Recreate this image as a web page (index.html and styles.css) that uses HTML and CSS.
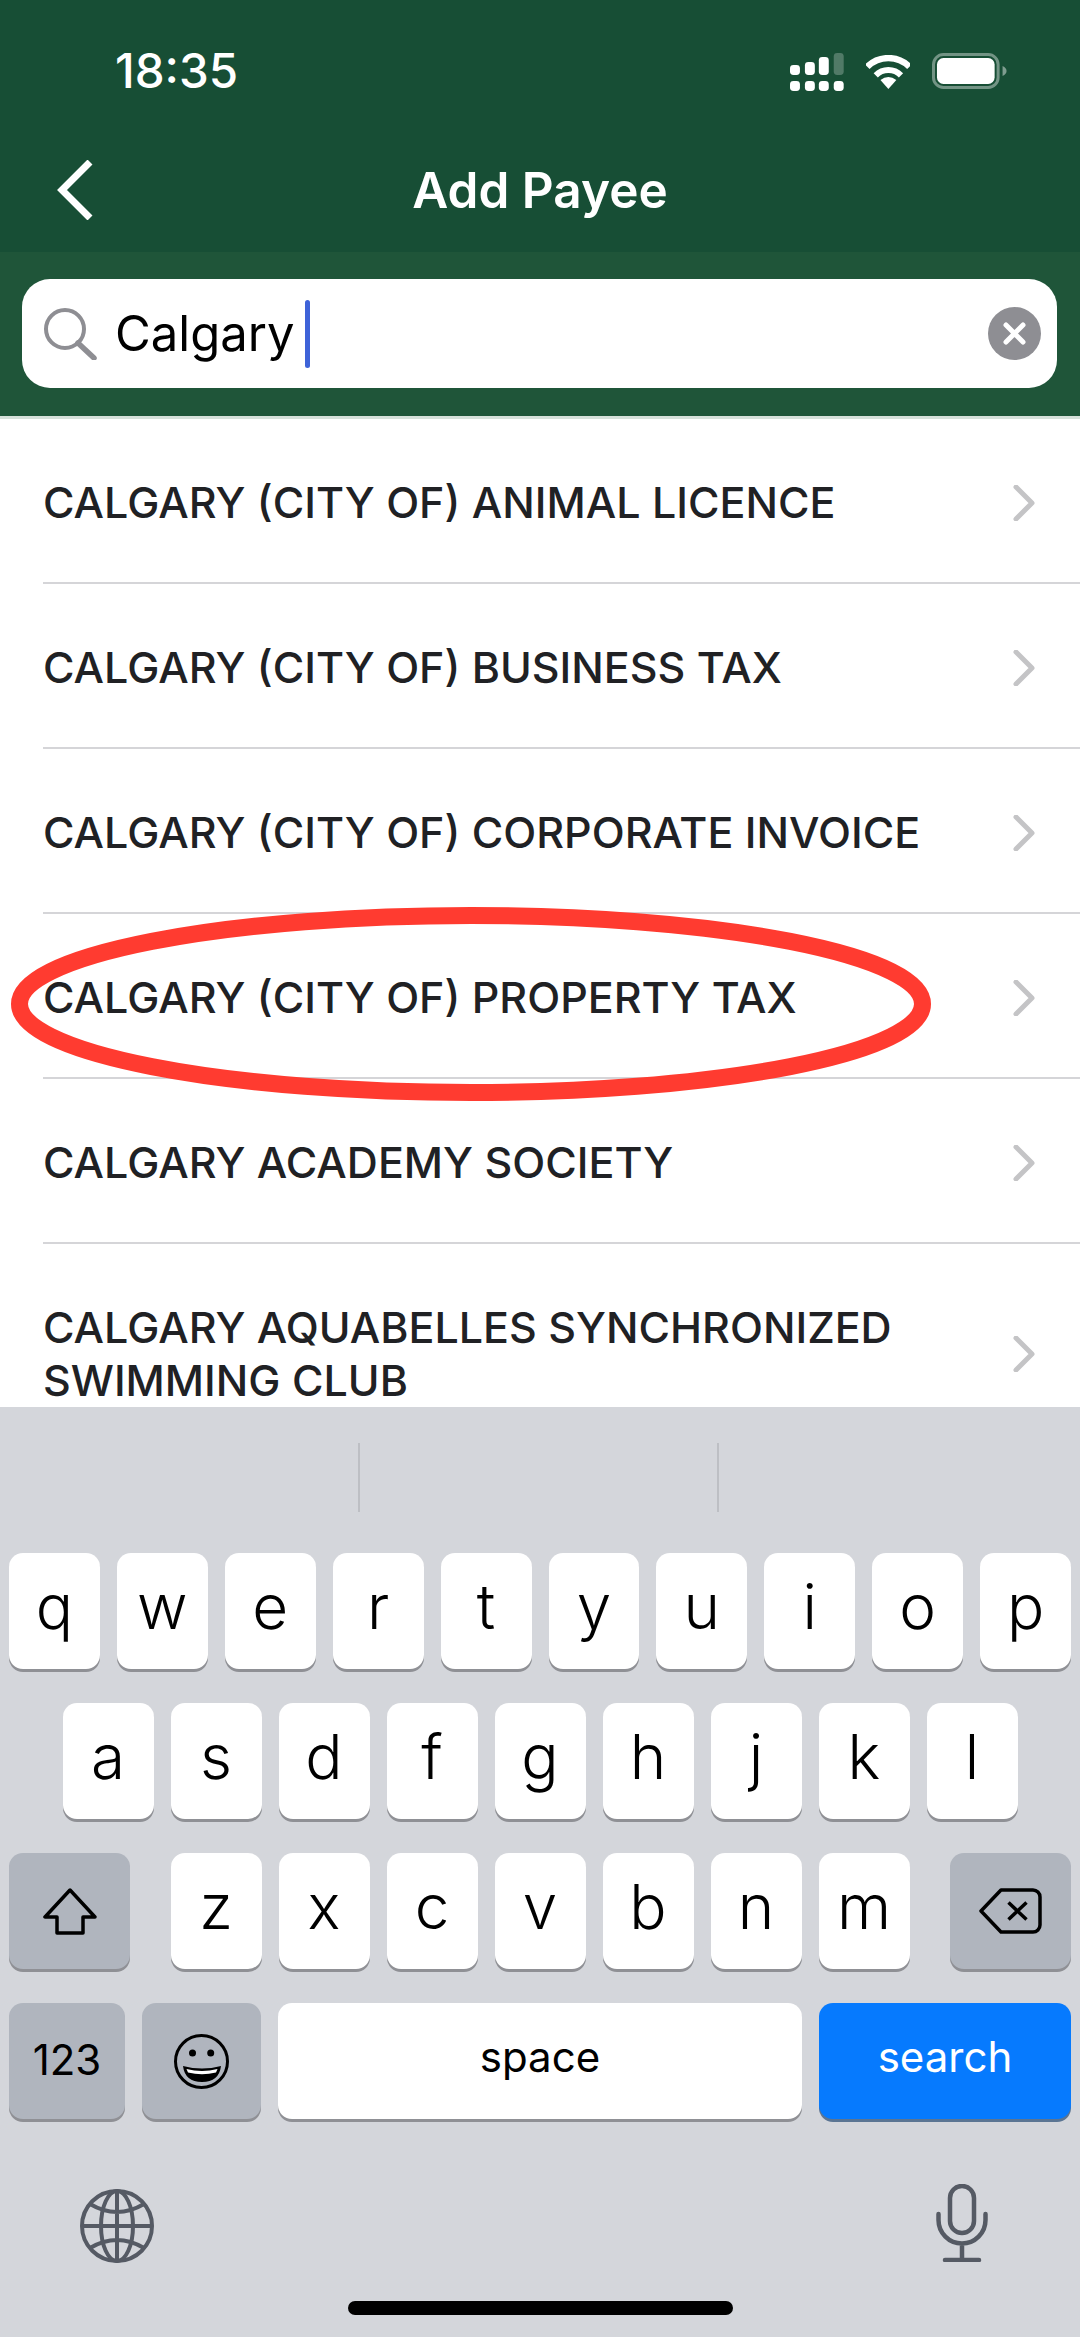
FILE: index.html
```html
<!DOCTYPE html>
<html lang="en">
<head>
  <meta charset="UTF-8">
  <title>Add Payee</title>
  <link rel="stylesheet" href="styles.css">
</head>
<body>

  <div class="topbar">
    <div class="status">
      <span class="time">18:35</span>
      <div class="status-icons">
        <svg class="signal" width="54" height="38" viewBox="0 0 54 38">
          <rect x="0" y="12" width="10" height="10" rx="3.5"/>
          <rect x="15" y="9" width="10" height="13" rx="3.5"/>
          <rect x="29" y="4" width="10" height="18" rx="3.5"/>
          <rect x="44" y="0" width="10" height="22" rx="3.5" opacity="0.25"/>
          <rect x="0" y="28" width="10" height="10" rx="3.5"/>
          <rect x="15" y="28" width="10" height="10" rx="3.5"/>
          <rect x="29" y="28" width="10" height="10" rx="3.5"/>
          <rect x="44" y="28" width="10" height="10" rx="3.5"/>
        </svg>
        <svg class="wifi" width="45" height="34" viewBox="0 0 45 34">
          <path d="M1.3 11.8A30 30 0 0 1 43.7 11.8" fill="none" stroke="#fff" stroke-width="6.5"/>
          <path d="M9.8 20.3A18 18 0 0 1 35.2 20.3" fill="none" stroke="#fff" stroke-width="6"/>
          <path d="M22.5 34L14.5 25Q22.5 19 30.5 25Z" fill="#fff"/>
        </svg>
        <svg class="battery" width="75" height="36" viewBox="0 0 75 36">
          <rect x="1.5" y="1.5" width="65" height="33" rx="10" fill="none" stroke="#fff" stroke-opacity="0.4" stroke-width="3"/>
          <rect x="5" y="5" width="58" height="26" rx="6.5" fill="#fff"/>
          <path d="M71 13Q75 15 75 18Q75 21 71 23Z" fill="#fff" fill-opacity="0.45"/>
        </svg>
      </div>
    </div>
    <div class="nav">
      <svg class="back" width="36" height="60" viewBox="0 0 36 60">
        <path d="M33 2L5 30L33 58" fill="none" stroke="#fff" stroke-width="7"/>
      </svg>
      <h1>Add Payee</h1>
    </div>
  </div>

  <div class="search-band">
    <div class="search-box">
      <svg class="glass" width="54" height="52" viewBox="0 0 54 52">
        <circle cx="22" cy="21" r="19" fill="none" stroke="#8e8e93" stroke-width="4"/>
        <path d="M35 35L51 50" fill="none" stroke="#8e8e93" stroke-width="5.5" stroke-linecap="round"/>
      </svg>
      <span class="query">Calgary</span>
      <span class="caret"></span>
      <svg class="clear" width="53" height="53" viewBox="0 0 53 53">
        <circle cx="26.5" cy="26.5" r="26.5" fill="#8e8e93"/>
        <path d="M18 18L35 35M35 18L18 35" fill="none" stroke="#fff" stroke-width="5" stroke-linecap="round"/>
      </svg>
    </div>
  </div>

  <div class="list">
    <div class="row"><span>CALGARY (CITY OF) ANIMAL LICENCE</span>
      <svg class="chev" width="22" height="36" viewBox="0 0 22 36"><path d="M3 2L19 18L3 34"/></svg></div>
    <div class="row"><span>CALGARY (CITY OF) BUSINESS TAX</span>
      <svg class="chev" width="22" height="36" viewBox="0 0 22 36"><path d="M3 2L19 18L3 34"/></svg></div>
    <div class="row"><span>CALGARY (CITY OF) CORPORATE INVOICE</span>
      <svg class="chev" width="22" height="36" viewBox="0 0 22 36"><path d="M3 2L19 18L3 34"/></svg></div>
    <div class="row"><span>CALGARY (CITY OF) PROPERTY TAX</span>
      <svg class="chev" width="22" height="36" viewBox="0 0 22 36"><path d="M3 2L19 18L3 34"/></svg></div>
    <div class="row"><span>CALGARY ACADEMY SOCIETY</span>
      <svg class="chev" width="22" height="36" viewBox="0 0 22 36"><path d="M3 2L19 18L3 34"/></svg></div>
    <div class="row tall"><span>CALGARY AQUABELLES SYNCHRONIZED<br>SWIMMING CLUB</span>
      <svg class="chev" width="22" height="36" viewBox="0 0 22 36"><path d="M3 2L19 18L3 34"/></svg></div>

    <!-- red ring drawn over the screenshot -->
    <svg class="ring" width="1080" height="988" viewBox="0 0 1080 988">
      <ellipse cx="471" cy="585" rx="451.500" ry="88.500" fill="none" stroke="#ff3b30" stroke-width="17"/>
    </svg>
  </div>

  <div class="keyboard">
    <div class="suggest">
      <span class="divider"></span>
      <span class="divider"></span>
    </div>

    <div class="keys">
      <div class="key-row">
        <div class="key">q</div><div class="key">w</div><div class="key">e</div><div class="key">r</div><div class="key">t</div>
        <div class="key">y</div><div class="key">u</div><div class="key">i</div><div class="key">o</div><div class="key">p</div>
      </div>
      <div class="key-row">
        <div class="key">a</div><div class="key">s</div><div class="key">d</div><div class="key">f</div><div class="key">g</div>
        <div class="key">h</div><div class="key">j</div><div class="key">k</div><div class="key">l</div>
      </div>
      <div class="key-row wide-gap">
        <div class="key dark side">
          <svg width="54" height="47" viewBox="0 0 54 47">
            <path d="M27 2L2 29H14V45H40V29H52Z" fill="none" stroke="#000" stroke-width="3.500" stroke-linejoin="round"/>
          </svg>
        </div>
        <div class="letters">
          <div class="key">z</div><div class="key">x</div><div class="key">c</div><div class="key">v</div>
          <div class="key">b</div><div class="key">n</div><div class="key">m</div>
        </div>
        <div class="key dark side">
          <svg width="63" height="46" viewBox="0 0 63 46">
            <path d="M22 2H54A7 7 0 0 1 61 9V37A7 7 0 0 1 54 44H22L2 23Z" fill="none" stroke="#000" stroke-width="3.500" stroke-linejoin="round"/>
            <path d="M29.500 14.500L47.500 31.500M47.500 14.500L29.500 31.500" fill="none" stroke="#000" stroke-width="3.500"/>
          </svg>
        </div>
      </div>
      <div class="key-row">
        <div class="key dark small num">123</div>
        <div class="key dark emoji">
          <svg width="55" height="55" viewBox="0 0 55 55">
            <circle cx="27.500" cy="27.500" r="26" fill="none" stroke="#000" stroke-width="3"/>
            <circle cx="18.500" cy="19" r="3.500"/>
            <circle cx="36.700" cy="19" r="3.500"/>
            <path d="M9 32Q28 37 47 32Q45 48 28 48Q11 48 9 32Z"/>
            <path d="M12.500 35Q28 39 43.500 35L42 38.500Q28 42 14 38.500Z" fill="#fff"/>
          </svg>
        </div>
        <div class="key small space">space</div>
        <div class="key small go">search</div>
      </div>
    </div>

    <div class="kb-bottom">
      <svg width="74" height="74" viewBox="0 0 74 74" fill="none" stroke="#555a64" stroke-width="4">
        <circle cx="37" cy="37" r="35"/>
        <ellipse cx="37" cy="37" rx="16" ry="35"/>
        <path d="M37 2V72M2 37H72M10 15Q37 31 64 15M10 59Q37 43 64 59"/>
      </svg>
      <svg width="52" height="78" viewBox="0 0 52 78" fill="none" stroke="#555a64" stroke-width="4.500" stroke-linecap="round">
        <rect x="14" y="2" width="24" height="47" rx="12"/>
        <path d="M2.500 30V36A23.500 23.500 0 0 0 49.500 36V30M26 60V75M9 76H43"/>
      </svg>
    </div>
    <div class="home-bar"></div>
  </div>

</body>
</html>
```

FILE: styles.css
```css
* {
  box-sizing: border-box;
}
body {
  margin: 0;
  height: 100vh;
  overflow: hidden;
  background-color: #fff;
  font-family: 'Inter', 'Liberation Sans', sans-serif;
  display: flex;
  flex-direction: column;
}
.topbar {
  height: 252px;
  background-color: #174e35;
  color: #fff;
  flex-shrink: 0;
}
.status {
  height: 142px;
  padding: 53px 73px 0 115px;
  display: flex;
  justify-content: space-between;
  align-items: flex-start;
}
.time {
  font-size: 47.500px;
  line-height: 36px;
  font-weight: 500;
}
.status-icons {
  display: flex;
  align-items: flex-start;
  width: 217px;
  padding-left: 0;
}
.signal {
  fill: #fff;
  margin-right: 22px;
}
.wifi {
  margin-top: 2px;
  margin-right: 22px;
}
.nav {
  position: relative;
  height: 110px;
  display: flex;
  align-items: center;
  justify-content: center;
}
.back {
  position: absolute;
  left: 57px;
  top: 18px;
}
h1 {
  margin: 0 0 14px 0;
  font-size: 49.500px;
  font-weight: 600;
  line-height: 60px;
}
.search-band {
  height: 167px;
  background-color: #1f5539;
  border-bottom: 3px solid #d6e0da;
  padding: 27px 23px 0 22px;
  flex-shrink: 0;
}
.search-box {
  height: 109px;
  background-color: #fff;
  border-radius: 28px;
  display: flex;
  align-items: center;
  padding: 0 16px 0 21px;
}
.query {
  margin-left: 18px;
  font-size: 49px;
  color: #000;
}
.caret {
  width: 5px;
  height: 68px;
  margin-left: 10px;
  border-radius: 3px;
  background-color: #3e63d8;
}
.clear {
  margin-left: auto;
}
.list {
  position: relative;
  height: 988px;
  flex-shrink: 0;
  overflow: hidden;
  padding-left: 43px;
}
.row {
  height: 165px;
  border-bottom: 2px solid #d5d5d8;
  display: flex;
  align-items: center;
  justify-content: space-between;
  padding-right: 45px;
  padding-top: 4px;
  font-size: 43px;
  font-weight: 450;
  line-height: 53px;
  color: #202124;
}
.row.tall {
  height: 220px;
  padding-top: 0;
  border-bottom: none;
}
.chev {
  fill: none;
  stroke: #c4c4c6;
  stroke-width: 5;
  stroke-linecap: round;
  stroke-linejoin: round;
}
.ring {
  position: absolute;
  left: 0;
  top: 0;
}
.keyboard {
  flex: 1;
  background-color: #d4d6db;
  display: flex;
  flex-direction: column;
}
.suggest {
  height: 146px;
  padding: 36px 361px 0 358px;
  display: flex;
  justify-content: space-between;
  align-items: flex-start;
}
.divider {
  width: 2px;
  height: 69px;
  background-color: #bdbfc4;
}
.keys {
  padding: 0 9px;
  display: flex;
  flex-direction: column;
  gap: 34px;
}
.key-row {
  display: flex;
  justify-content: center;
  gap: 17px;
}
.wide-gap {
  justify-content: space-between;
  gap: 0;
}
.letters {
  display: flex;
  gap: 17px;
}
.key {
  width: 91px;
  height: 116px;
  background-color: #fff;
  border-radius: 14px;
  box-shadow: 0 3px 0 #8f9095;
  display: flex;
  align-items: center;
  justify-content: center;
  font-size: 62px;
  font-weight: 350;
  color: #000;
  padding-bottom: 9px;
}
.key.dark {
  background-color: #b0b5be;
}
.key.side {
  width: 121px;
  padding-bottom: 0;
}
.key.small {
  font-size: 42px;
  font-weight: 400;
  padding-bottom: 9px;
}
.key.num {
  width: 116px;
  padding-bottom: 3px;
}
.key.emoji {
  width: 119px;
  padding-bottom: 0;
}
.key.space {
  width: 524px;
}
.key.go {
  width: 252px;
  background-color: #067afe;
  color: #fff;
  box-shadow: 0 3px 0 #5b7593;
}
.kb-bottom {
  display: flex;
  justify-content: space-between;
  align-items: flex-start;
  padding: 65px 92px 0 80px;
  height: 182px;
}
.kb-bottom svg:first-child {
  margin-top: 5px;
}
.home-bar {
  width: 385px;
  height: 14px;
  margin-left: 348px;
  border-radius: 7px;
  background-color: #000;
}
```
